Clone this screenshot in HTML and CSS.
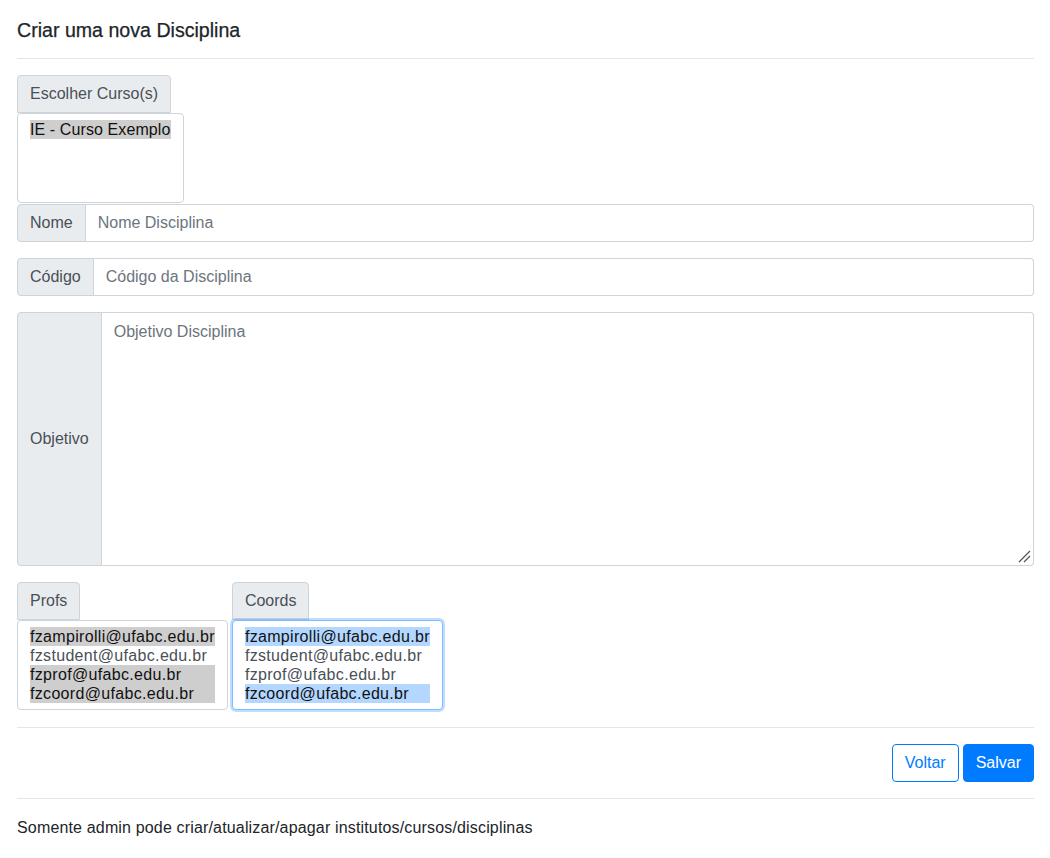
FILE: index.html
```html
<!DOCTYPE html>
<html lang="pt">
<head>
<meta charset="utf-8">
<title>Criar uma nova Disciplina</title>
<link rel="stylesheet" href="styles.css">
</head>
<body>
<div class="page">
  <h5 class="title">Criar uma nova Disciplina</h5>
  <hr class="rule rule-top">

  <div class="pick">
    <div class="addon addon-top">Escolher Curso(s)</div>
    <div class="listbox">
      <div class="opt sel">IE - Curso Exemplo</div>
      <div class="opt">&nbsp;</div>
      <div class="opt">&nbsp;</div>
      <div class="opt">&nbsp;</div>
    </div>
  </div>

  <div class="group">
    <div class="addon addon-left">Nome</div>
    <div class="field placeholder">Nome Disciplina</div>
  </div>

  <div class="group">
    <div class="addon addon-left">Código</div>
    <div class="field placeholder">Código da Disciplina</div>
  </div>

  <div class="group group-tall">
    <div class="addon addon-left addon-center">Objetivo</div>
    <div class="field area placeholder">Objetivo Disciplina
      <svg class="grip" width="14" height="14" viewBox="0 0 14 14"><path d="M2 13 L13 2 M7 13 L13 7" stroke="#555" stroke-width="1.3" fill="none"/></svg>
    </div>
  </div>

  <div class="people">
    <div class="pick">
      <div class="addon addon-top">Profs</div>
      <div class="listbox">
        <div class="opt sel">fzampirolli@ufabc.edu.br</div>
        <div class="opt">fzstudent@ufabc.edu.br</div>
        <div class="opt sel">fzprof@ufabc.edu.br</div>
        <div class="opt sel">fzcoord@ufabc.edu.br</div>
      </div>
    </div>
    <div class="pick">
      <div class="addon addon-top">Coords</div>
      <div class="listbox focus">
        <div class="opt sel">fzampirolli@ufabc.edu.br</div>
        <div class="opt">fzstudent@ufabc.edu.br</div>
        <div class="opt">fzprof@ufabc.edu.br</div>
        <div class="opt sel">fzcoord@ufabc.edu.br</div>
      </div>
    </div>
  </div>

  <hr class="rule">
  <div class="actions">
    <button class="btn btn-outline">Voltar</button>
    <button class="btn btn-primary">Salvar</button>
  </div>
  <hr class="rule">
  <p class="note">Somente admin pode criar/atualizar/apagar institutos/cursos/disciplinas</p>
</div>
</body>
</html>
```

FILE: styles.css
```css
* { box-sizing: border-box; }
html, body {
  margin: 0;
  padding: 0;
  background: #fff;
}
body {
  font-family: "Liberation Sans", Arial, sans-serif;
  font-size: 16px;
  line-height: 24px;
  color: #212529;
}
.page {
  padding: 16px 16px 0 17px;
}
.title {
  margin: 0;
  font-size: 19.6px;
  font-weight: normal;
  -webkit-text-stroke: 0.25px #212529;
  line-height: 28px;
  color: #212529;
}
.rule {
  border: 0;
  border-top: 1px solid rgba(0,0,0,0.1);
  margin: 16px 0;
  height: 0;
}
.rule-top {
  margin-top: 14px;
}
.addon {
  background: #e9ecef;
  border: 1px solid #ced4da;
  color: #495057;
  padding: 6px 12px;
  line-height: 24px;
  height: 38px;
  white-space: nowrap;
}
.addon-top {
  display: inline-block;
  border-radius: 4px 4px 0 0;
}
.pick {
  display: flex;
  flex-direction: column;
  align-items: flex-start;
}
.listbox {
  display: inline-block;
  border: 1px solid #ced4da;
  border-radius: 4px;
  padding: 6px 12px;
  background: #fff;
}
.listbox.focus {
  border-color: #80bdff;
  box-shadow: 0 0 0 2px rgba(0,123,255,0.25);
}
.opt {
  line-height: 19px;
  height: 19px;
  color: #495057;
  white-space: nowrap;
  letter-spacing: 0.1px;
}
.people .opt {
  letter-spacing: 0.32px;
}
.opt.sel {
  background: #cecece;
  color: #111;
}
.focus .opt.sel {
  background: #b3d7ff;
}
.group {
  display: flex;
  margin-bottom: 16px;
}
.pick + .group {
  margin-top: 1px;
}
.addon-left {
  border-radius: 4px 0 0 4px;
}
.field {
  flex: 1;
  border: 1px solid #ced4da;
  border-left: 0;
  border-radius: 0 4px 4px 0;
  padding: 6px 12px;
  height: 38px;
  line-height: 24px;
}
.placeholder {
  color: #6c757d;
}
.group-tall .addon-center {
  height: 254px;
  display: flex;
  align-items: center;
}
.area {
  height: 254px;
  padding-top: 7px;
  position: relative;
}
.grip {
  position: absolute;
  right: 2px;
  bottom: 2px;
}
.people {
  display: flex;
  gap: 4px;
  padding-bottom: 1px;
}
.actions {
  display: flex;
  justify-content: flex-end;
  gap: 4px;
}
.btn {
  font-family: inherit;
  font-size: 16px;
  line-height: 24px;
  padding: 6px 12px;
  border-radius: 4px;
  border: 1px solid #007bff;
  height: 38px;
  cursor: pointer;
}
.btn-outline {
  background: #fff;
  color: #007bff;
}
.btn-primary {
  background: #007bff;
  color: #fff;
}
.note {
  margin: 0;
  line-height: 24px;
  letter-spacing: 0.16px;
  padding-top: 1px;
}
```
